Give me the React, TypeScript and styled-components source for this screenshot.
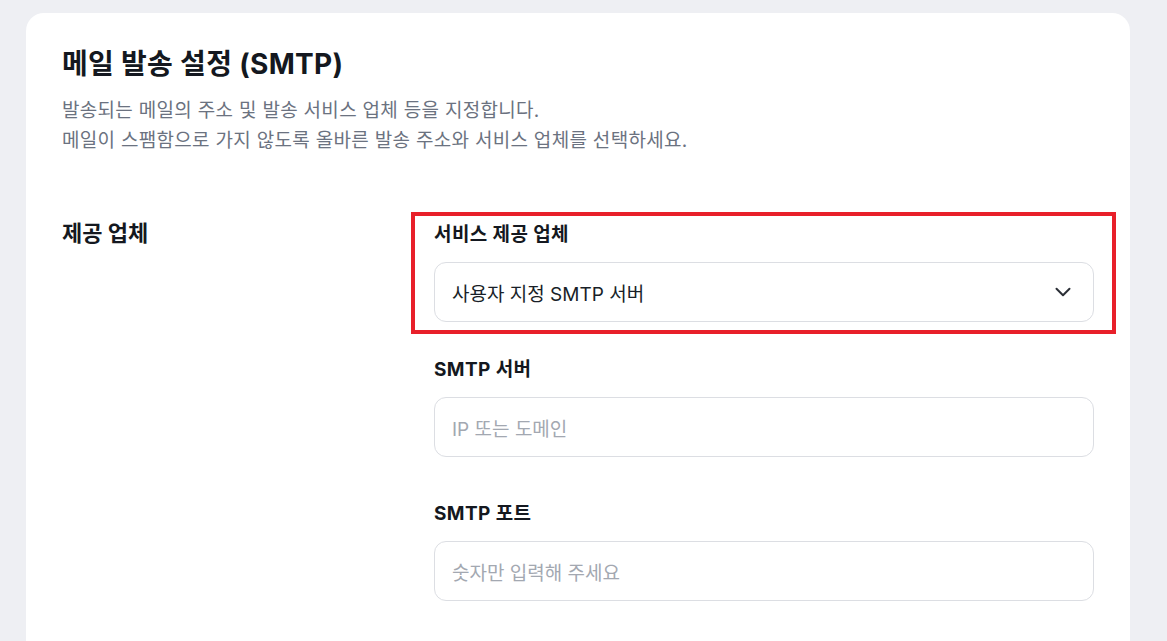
import React from "react";
import styled, { createGlobalStyle } from "styled-components";

const GlobalStyle = createGlobalStyle`
  html, body {
    margin: 0;
    padding: 0;
    background: #eeeff3;
    font-family: Inter, "Noto Sans CJK KR", sans-serif;
    color: #191f28;
  }
  * { box-sizing: border-box; }
`;

const Page = styled.div`
  padding: 13px 37px 0 26px;
  height: 641px;
  overflow: hidden;
`;

const Card = styled.section`
  background: #ffffff;
  border-radius: 18px;
  padding: 33px 36px 80px 36px;
  min-height: 700px;
`;

const Title = styled.h1`
  margin: 0;
  font-size: 28px;
  line-height: 36px;
  font-weight: 700;
  color: #141820;
  letter-spacing: 0.3px;
`;

const Description = styled.p`
  margin: 14px 0 0;
  font-size: 19px;
  line-height: 30px;
  letter-spacing: 0.3px;
  color: #6b7280;
`;

const Row = styled.div`
  display: flex;
  align-items: flex-start;
  margin-top: 56px;
`;

const RowLabel = styled.div`
  width: 372px;
  flex-shrink: 0;
  margin-top: 6px;
  font-size: 22px;
  line-height: 30px;
  font-weight: 700;
  color: #141820;
`;

const Fields = styled.div`
  flex: 1;
  display: flex;
  flex-direction: column;
`;

const Highlight = styled.div`
  border: 4px solid #e8202a;
  margin: 0 -22px 23px -23px;
  padding: 6px 18px 8px 19px;
`;

const Field = styled.div<{ $last?: boolean }>`
  display: flex;
  flex-direction: column;
  margin-bottom: ${(p) => (p.$last ? "0" : "44px")};
`;

const Label = styled.label`
  font-size: 19px;
  line-height: 26px;
  font-weight: 700;
  letter-spacing: 0.4px;
  color: #141820;
  margin-bottom: 14px;
`;

const Box = styled.div`
  height: 60px;
  border: 1px solid #dcdee3;
  border-radius: 12px;
  display: flex;
  align-items: center;
  justify-content: space-between;
  padding: 0 22px 0 17px;
  font-size: 19px;
`;

const Value = styled.span`
  color: #191f28;
`;

const Placeholder = styled.span`
  color: #a3a8b1;
`;

const Chevron = () => (
  <svg width="16" height="10" viewBox="0 0 16 10" fill="none">
    <path d="M1.5 1.8 8 8.2l6.5-6.4" stroke="#2b2f36" strokeWidth="2" strokeLinecap="round" strokeLinejoin="round" />
  </svg>
);

export default function App() {
  return (
    <>
      <GlobalStyle />
      <Page>
        <Card>
          <Title>메일 발송 설정 (SMTP)</Title>
          <Description>
            발송되는 메일의 주소 및 발송 서비스 업체 등을 지정합니다.
            <br />
            메일이 스팸함으로 가지 않도록 올바른 발송 주소와 서비스 업체를 선택하세요.
          </Description>
          <Row>
            <RowLabel>제공 업체</RowLabel>
            <Fields>
              <Highlight>
                <Field $last>
                  <Label>서비스 제공 업체</Label>
                  <Box>
                    <Value>사용자 지정 SMTP 서버</Value>
                    <Chevron />
                  </Box>
                </Field>
              </Highlight>
              <Field>
                <Label>SMTP 서버</Label>
                <Box>
                  <Placeholder>IP 또는 도메인</Placeholder>
                </Box>
              </Field>
              <Field $last>
                <Label>SMTP 포트</Label>
                <Box>
                  <Placeholder>숫자만 입력해 주세요</Placeholder>
                </Box>
              </Field>
            </Fields>
          </Row>
        </Card>
      </Page>
    </>
  );
}
